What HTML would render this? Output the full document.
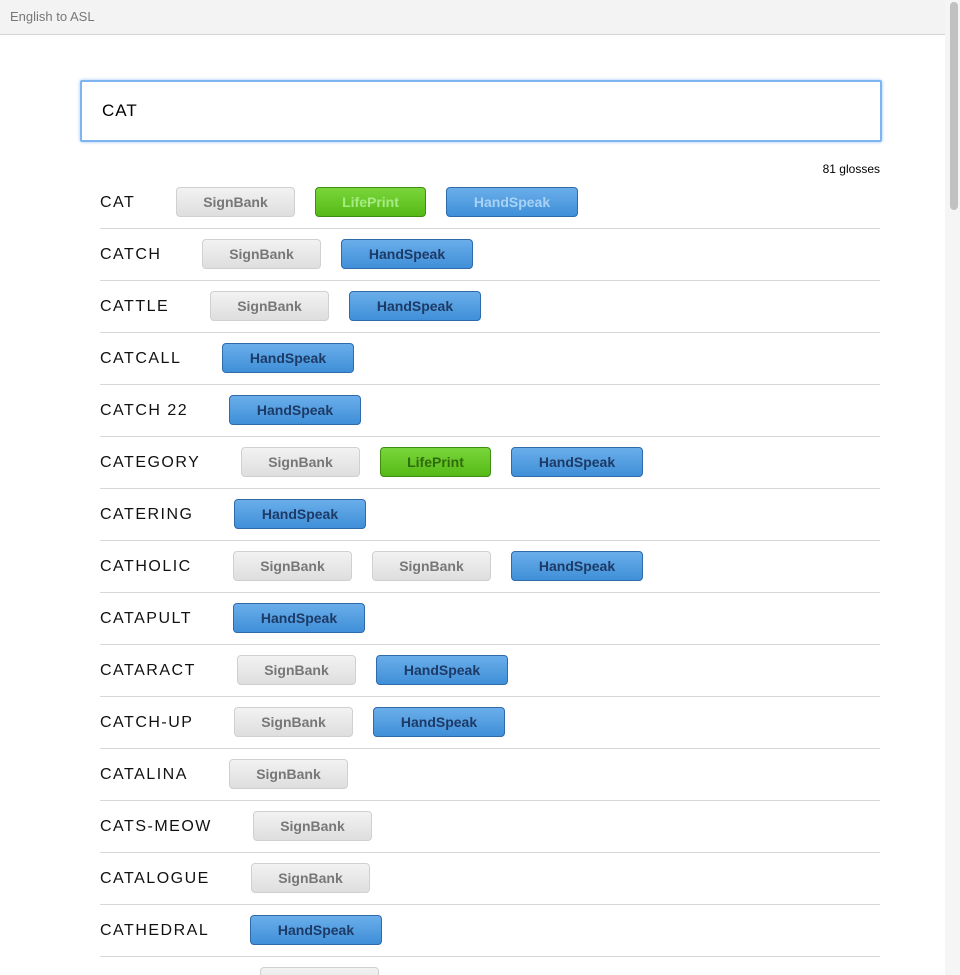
<!DOCTYPE html>
<html style="height:975px;overflow:hidden"><head><style>
body{margin:0;width:960px;height:975px;overflow:hidden;background:#fff;font-family:"Liberation Sans",sans-serif;position:relative}
.top{height:34px;background:#f3f3f3;border-bottom:1px solid #d4d4d4;font-size:13px;color:#777;line-height:34px;padding-left:10px}
.inp{position:absolute;left:80px;top:80px;height:58px;border:2px solid #7eb4ef;border-radius:2px;box-shadow:0 0 3px #9cc6f5;font-size:17px;letter-spacing:1px;line-height:58px;padding-left:20px;width:778px}
.cnt{position:absolute;right:80px;top:162px;font-size:12px}
.row{position:absolute;left:100px;width:780px;height:51px;border-bottom:1px solid #d8d8d8}
.lb{position:absolute;left:0;top:0;line-height:51px;font-size:16px;letter-spacing:1.5px;color:#111}
.bs{position:absolute;top:10px;height:30px;display:flex;gap:20px}
.b{box-sizing:border-box;height:30px;border-radius:4px;font-size:14px;font-weight:bold;text-align:center;line-height:28px}
.s{width:119px;background:linear-gradient(#f2f2f2,#dedede);border:1px solid #d0d0d0;color:#777}
.l{width:111px;background:linear-gradient(#7ad63a,#55b916);border:1px solid #3e8e12;color:#2f6b0c}
.h{width:132px;background:linear-gradient(#6aaeea,#3f8fd8);border:1px solid #2f6aab;color:#1d3a66}
.sb{position:absolute;right:0;top:0;width:15px;height:975px;background:#f5f5f5}
.th{position:absolute;right:2px;top:2px;width:8px;height:208px;border-radius:4px;background:#c1c1c1}
</style></head><body>
<div class="top">English to ASL</div>
<div class="inp">CAT</div>
<div class="cnt">81 glosses</div>
<div class="row" style="top:177px"><span class="lb">CAT</span><div class="bs" style="left:76px"><div class="b s">SignBank</div><div class="b l" style="color:#a6ec82">LifePrint</div><div class="b h" style="color:#a9d3f5">HandSpeak</div></div></div>
<div class="row" style="top:229px"><span class="lb">CATCH</span><div class="bs" style="left:102px"><div class="b s">SignBank</div><div class="b h">HandSpeak</div></div></div>
<div class="row" style="top:281px"><span class="lb">CATTLE</span><div class="bs" style="left:110px"><div class="b s">SignBank</div><div class="b h">HandSpeak</div></div></div>
<div class="row" style="top:333px"><span class="lb">CATCALL</span><div class="bs" style="left:122px"><div class="b h">HandSpeak</div></div></div>
<div class="row" style="top:385px"><span class="lb">CATCH 22</span><div class="bs" style="left:129px"><div class="b h">HandSpeak</div></div></div>
<div class="row" style="top:437px"><span class="lb">CATEGORY</span><div class="bs" style="left:141px"><div class="b s">SignBank</div><div class="b l">LifePrint</div><div class="b h">HandSpeak</div></div></div>
<div class="row" style="top:489px"><span class="lb">CATERING</span><div class="bs" style="left:134px"><div class="b h">HandSpeak</div></div></div>
<div class="row" style="top:541px"><span class="lb">CATHOLIC</span><div class="bs" style="left:133px"><div class="b s">SignBank</div><div class="b s">SignBank</div><div class="b h">HandSpeak</div></div></div>
<div class="row" style="top:593px"><span class="lb">CATAPULT</span><div class="bs" style="left:133px"><div class="b h">HandSpeak</div></div></div>
<div class="row" style="top:645px"><span class="lb">CATARACT</span><div class="bs" style="left:137px"><div class="b s">SignBank</div><div class="b h">HandSpeak</div></div></div>
<div class="row" style="top:697px"><span class="lb">CATCH-UP</span><div class="bs" style="left:134px"><div class="b s">SignBank</div><div class="b h">HandSpeak</div></div></div>
<div class="row" style="top:749px"><span class="lb">CATALINA</span><div class="bs" style="left:129px"><div class="b s">SignBank</div></div></div>
<div class="row" style="top:801px"><span class="lb">CATS-MEOW</span><div class="bs" style="left:153px"><div class="b s">SignBank</div></div></div>
<div class="row" style="top:853px"><span class="lb">CATALOGUE</span><div class="bs" style="left:151px"><div class="b s">SignBank</div></div></div>
<div class="row" style="top:905px"><span class="lb">CATHEDRAL</span><div class="bs" style="left:150px"><div class="b h">HandSpeak</div></div></div>
<div class="row" style="top:957px"><span class="lb">CATHOLICISM</span><div class="bs" style="left:160px"><div class="b s">SignBank</div></div></div>
<div class="sb"><div class="th"></div></div>
</body></html>
